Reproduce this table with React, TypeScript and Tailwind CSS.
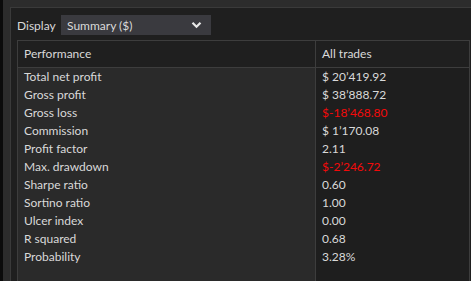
import React from "react";

const rows: { label: string; value: string; neg?: boolean }[] = [
  { label: "Total net profit", value: "$ 20\u2019419.92" },
  { label: "Gross profit", value: "$ 38\u2019888.72" },
  { label: "Gross loss", value: "$-18\u2019468.80", neg: true },
  { label: "Commission", value: "$ 1\u2019170.08" },
  { label: "Profit factor", value: "2.11" },
  { label: "Max. drawdown", value: "$-2\u2019246.72", neg: true },
  { label: "Sharpe ratio", value: "0.60" },
  { label: "Sortino ratio", value: "1.00" },
  { label: "Ulcer index", value: "0.00" },
  { label: "R squared", value: "0.68" },
  { label: "Probability", value: "3.28%" },
];

export default function App() {
  return (
    <div
      className="w-[471px] h-[281px] flex overflow-hidden bg-[#0b0b0b] text-[12px] text-[#d9d9d9]"
      style={{ fontFamily: 'Lato, "Noto Sans", sans-serif' }}
    >
      <div className="w-[3px] bg-[#0b0b0b]" />
      <div className="flex-1 flex flex-col bg-[#2c2c2c] pt-[7px] pl-[7px] overflow-hidden">
        <div className="flex-1 flex flex-col bg-[#1f1f1f] border-t border-l border-[#3a3a3a] pl-[6px] pt-[7px] overflow-hidden">
          <div className="flex items-center h-[20px]">
            <span className="w-[44px] leading-none pt-[2px]">Display</span>
            <div className="w-[150px] h-[20px] bg-[#3a3a3f] flex items-center justify-between pl-[6px] pr-[9px]">
              <span className="leading-none pt-[2px]">Summary ($)</span>
              <svg width="11" height="8" viewBox="0 0 11 8">
                <path d="M1.5 1.8 L5.5 5.8 L9.5 1.8" stroke="#e8e8e8" strokeWidth="2.2" fill="none" />
              </svg>
            </div>
          </div>
          <div className="mt-[5px] w-[453px] flex-1 flex flex-col border-t border-l border-r border-[#3d3d3d]">
            <div className="flex h-[27px] border-b border-[#3d3d3d] bg-[#1f1f1f]">
              <div className="w-[298px] border-r border-[#3d3d3d] pl-[6px] flex items-center">Performance</div>
              <div className="flex-1 pl-[6px] flex items-center">All trades</div>
            </div>
            <div className="flex-1 flex">
              <div className="w-[298px] bg-[#2a2a2a] border-r border-[#3d3d3d] pl-[6px]">
                {rows.map((r) => (
                  <div key={r.label} className="h-[18px] flex items-center">
                    {r.label}
                  </div>
                ))}
              </div>
              <div className="flex-1 bg-[#1e1e1e] pl-[6px]">
                {rows.map((r) => (
                  <div
                    key={r.label}
                    className={`h-[18px] flex items-center ${r.neg ? "text-[#f40a0a]" : ""}`}
                  >
                    {r.value}
                  </div>
                ))}
              </div>
            </div>
          </div>
        </div>
      </div>
    </div>
  );
}
